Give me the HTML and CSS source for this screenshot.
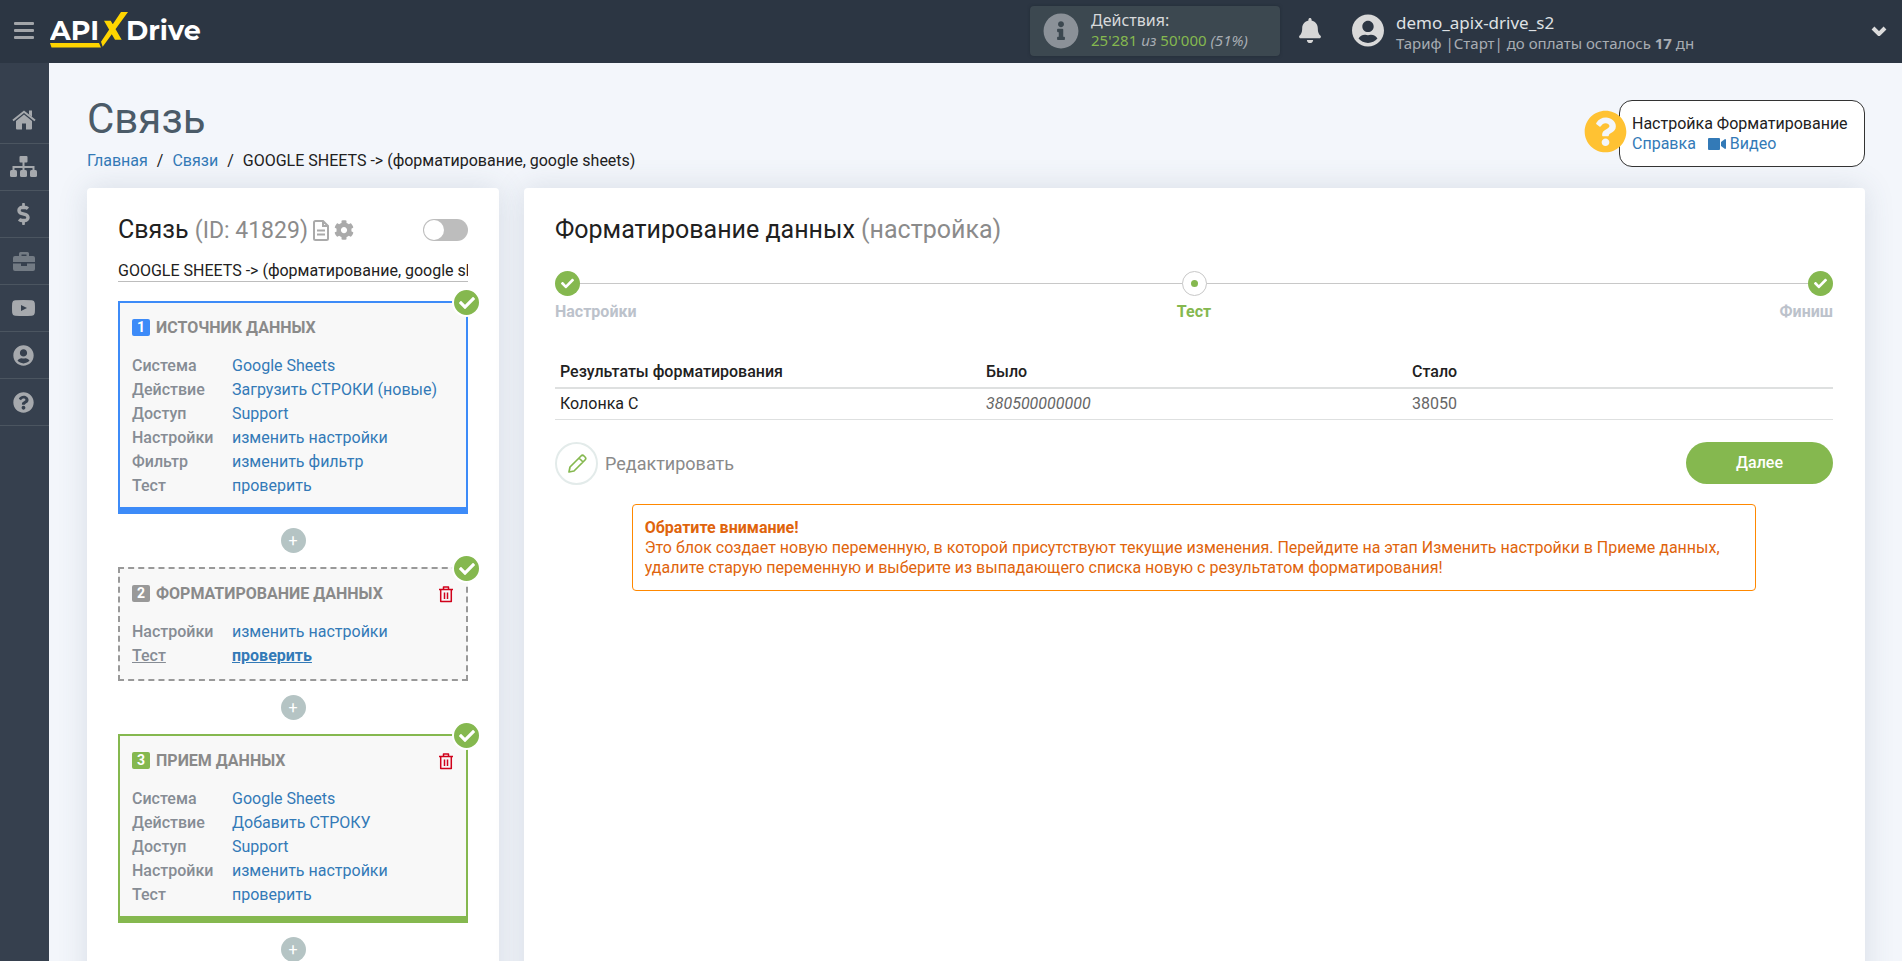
FILE: index.html
```html
<!DOCTYPE html>
<html lang="ru">
<head>
<meta charset="utf-8">
<title>ApiX-Drive — Связь</title>
<link rel="stylesheet" href="styles.css">
</head>
<body>
<svg class="sprite" aria-hidden="true">
  <symbol id="i-user" viewBox="0 0 496 512"><path d="M248 8C111 8 0 119 0 256s111 248 248 248 248-111 248-248S385 8 248 8zm0 96c48.600 0 88 39.400 88 88s-39.400 88-88 88-88-39.400-88-88 39.400-88 88-88zm0 344c-58.700 0-111.300-26.600-146.500-68.200 18.800-35.400 55.600-59.800 98.500-59.800 2.400 0 4.800.4 7.100 1.100 13 4.200 26.600 6.900 40.900 6.900s28-2.700 40.900-6.900c2.300-.7 4.700-1.100 7.100-1.100 42.900 0 79.700 24.400 98.500 59.800C359.300 421.400 306.700 448 248 448z"/></symbol>
  <symbol id="i-question" viewBox="0 0 512 512"><path d="M504 256c0 137-111 248-248 248S8 393 8 256 119 8 256 8s248 111 248 248zM262.700 90c-54.500 0-89.300 23-116.500 63.800-3.500 5.300-2.400 12.400 2.700 16.300l34.700 26.300c5.200 3.900 12.600 3 16.700-2.100 17.900-22.700 30.100-35.800 57.300-35.800 20.400 0 45.700 13.100 45.700 33 0 15-12.400 22.700-32.500 34C247.100 238.500 216 254.900 216 296v4c0 6.600 5.400 12 12 12h56c6.600 0 12-5.400 12-12v-1.300c0-28.500 83.200-29.600 83.200-106.700 0-58-60.200-102-116.500-102zM256 338c-25.400 0-46 20.600-46 46s20.600 46 46 46 46-20.600 46-46-20.600-46-46-46z"/></symbol>
  <symbol id="i-trash" viewBox="0 0 14 17"><path d="M0 3.500h14M4.500 3V1h5v2M1.700 3.500v12h10.600v-12M5.500 6.500v6.500M8.500 6.500v6.500" fill="none" stroke="currentColor" stroke-width="1.500" stroke-linejoin="round"/></symbol>
  <symbol id="i-check" viewBox="0 0 512 512"><path d="M173.900 439.400l-166.400-166.400c-10-10-10-26.200 0-36.200l36.200-36.200c10-10 26.200-10 36.200 0L192 312.700 432.100 72.600c10-10 26.200-10 36.200 0l36.200 36.200c10 10 10 26.200 0 36.200l-294.400 294.400c-10 10-26.200 10-36.200 0z"/></symbol>
</svg>

<header class="topbar">
  <button class="burger" type="button" aria-label="Меню"><span></span><span></span><span></span></button>
  <a class="logo" href="#" aria-label="ApiX-Drive">
    <svg width="154" height="37" viewBox="0 0 154 37">
      <text class="logo-text" x="0" y="28">API</text>
      <text class="logo-text" x="76" y="28">Drive</text>
      <path class="logo-mark" d="M0 31h49l2 4.500H1.500zM71 0h7L52.700 34.700 51 29.700zM54 8.700h6.700l11 19H65z"/>
    </svg>
  </a>
  <div class="usage">
    <svg class="usage-icon" viewBox="0 0 512 512"><path d="M256 8C119 8 8 119 8 256s111 248 248 248 248-111 248-248S393 8 256 8zm0 110c23.200 0 42 18.800 42 42s-18.800 42-42 42-42-18.800-42-42 18.800-42 42-42zm56 254c0 6.600-5.400 12-12 12h-88c-6.600 0-12-5.400-12-12v-24c0-6.600 5.400-12 12-12h12v-64h-12c-6.600 0-12-5.400-12-12v-24c0-6.600 5.400-12 12-12h64c6.600 0 12 5.400 12 12v100h12c6.600 0 12 5.400 12 12v24z"/></svg>
    <div class="usage-text">
      <div class="usage-title">Действия:</div>
      <div class="usage-count"><b>25'281</b> <i>из</i> <b>50'000</b> <i>(51%)</i></div>
    </div>
  </div>
  <button class="bell" type="button" aria-label="Уведомления"><svg width="22" height="25" viewBox="0 0 448 512"><path d="M224 512c35.300 0 64-28.700 64-64H160c0 35.300 28.700 64 64 64zm215.400-149.700c-19.300-20.800-55.500-52-55.500-154.300 0-77.700-54.500-139.900-127.900-155.200V32c0-17.700-14.300-32-32-32s-32 14.300-32 32v20.800C118.600 68.100 64.100 130.300 64.100 208c0 102.300-36.200 133.500-55.500 154.300-6 6.400-8.700 14.200-8.600 21.700.1 16.400 13 32 32.100 32h383.800c19.100 0 32-15.600 32.100-32 .1-7.500-2.600-15.300-8.600-21.700z"/></svg></button>
  <div class="account">
    <svg class="account-icon"><use href="#i-user"/></svg>
    <div class="account-text">
      <div class="account-name">demo_apix-drive_s2</div>
      <div class="account-plan">Тариф |Старт| до оплаты осталось <b>17</b> дн</div>
    </div>
  </div>
  <button class="more" type="button" aria-label="Ещё"><svg width="16" height="10" viewBox="0 0 16 10"><path d="M2 2l6 6 6-6" fill="none" stroke="currentColor" stroke-width="4"/></svg></button>
</header>

<div class="shell">
  <nav class="side" aria-label="Разделы">
    <a href="#" aria-label="Главная"><svg width="24" height="20" viewBox="0 0 24 20"><path d="M12 4.500l8 6.500v7.500q0 1-1 1h-5v-6h-4v6H5q-1 0-1-1V11z"/><path d="M1 10.500L12 1.700l11 8.800" fill="none" stroke="currentColor" stroke-width="2"/><path d="M17 .5h3V7l-3-2.500z"/></svg></a>
    <a href="#" aria-label="Связи"><svg width="27" height="22" viewBox="0 0 27 22"><path d="M12.500 6h2v4h10v5h-2v-3h-8v3h-2v-3h-8v3h-2v-5h10z"/><rect x="9.500" width="8" height="6.500" rx="1"/><rect y="14" width="7" height="7" rx="1.500"/><rect x="10" y="14" width="7" height="7" rx="1.500"/><rect x="20" y="14" width="7" height="7" rx="1.500"/></svg></a>
    <a href="#" aria-label="Оплата"><svg width="13" height="22" viewBox="0 0 288 512"><path d="M209.200 233.400l-108-31.600C88.700 198.200 80 186.500 80 173.500c0-16.300 13.200-29.500 29.500-29.500h66.300c12.200 0 24.200 3.700 34.200 10.500 6.100 4.100 14.300 3.100 19.500-2l34.800-34c7.100-6.900 6.100-18.400-1.800-24.500C238 74.800 207.400 64.100 176 64V16c0-8.800-7.200-16-16-16h-32c-8.800 0-16 7.200-16 16v48h-2.500C45.800 64-5.400 118.700.5 183.600c4.200 46.100 39.400 83.600 83.800 96.600l102.500 30c12.500 3.700 21.200 15.300 21.200 28.300 0 16.300-13.200 29.500-29.500 29.500h-66.300C100 368 88 364.300 78 357.500c-6.100-4.100-14.300-3.100-19.500 2l-34.800 34c-7.100 6.900-6.100 18.400 1.800 24.500 24.500 19.200 55.100 29.900 86.500 30v48c0 8.800 7.200 16 16 16h32c8.800 0 16-7.200 16-16v-48.200c46.600-.9 90.300-28.600 105.700-72.700 21.500-61.600-14.600-124.800-72.500-141.700z"/></svg></a>
    <a class="dim" href="#" aria-label="Проекты"><svg width="22" height="19" viewBox="0 0 22 19"><path fill-rule="evenodd" d="M6 4V1.500Q6 0 7.500 0h7Q16 0 16 1.500V4h4q2 0 2 2v4H0V6q0-2 2-2zm2.500 0h5V2.500h-5zM0 11.500h8V14h6v-2.500h8V17q0 2-2 2H2q-2 0-2-2z"/></svg></a>
    <a href="#" aria-label="Видео"><svg width="23" height="16" viewBox="0 0 23 16"><path fill-rule="evenodd" d="M3 .3Q11.500-.3 20 .3q2.500.2 2.800 2.700.4 5 0 10-.3 2.500-2.800 2.700-8.500.6-17 0Q.5 15.500.2 13q-.4-5 0-10Q.5.500 3 .3zM9 5v6l6-3z"/></svg></a>
    <a href="#" aria-label="Профиль"><svg width="21" height="21"><use href="#i-user"/></svg></a>
    <a href="#" aria-label="Помощь"><svg width="21" height="21"><use href="#i-question"/></svg></a>
  </nav>

  <main class="page">
    <div class="page-head">
      <div>
        <h1>Связь</h1>
        <nav class="crumbs" aria-label="Навигация"><a href="#">Главная</a><span>/</span><a href="#">Связи</a><span>/</span>GOOGLE SHEETS -&gt; (форматирование, google sheets)</nav>
      </div>
      <aside class="help">
        <svg class="help-icon"><use href="#i-question"/></svg>
        <div>Настройка Форматирование</div>
        <div class="help-links"><a href="#">Справка</a><a href="#"><svg width="18" height="12" viewBox="0 0 18 12"><rect width="12" height="12" rx="1"/><path d="M13 4l4-3q1 0 1 1v8q0 1-1 1l-4-3z"/></svg> Видео</a></div>
      </aside>
    </div>

    <div class="columns">
      <section class="card flow">
        <div class="flow-head">
          <h2>Связь <small>(ID: 41829)</small></h2>
          <button class="icon-btn" type="button" aria-label="Журнал"><svg width="16" height="21" viewBox="0 0 16 21"><path d="M1 2.500Q1 1 2.500 1H10l5 5v12.500q0 1.500-1.500 1.500h-11Q1 20 1 18.500zM10 1v5h5M4 10.500h8M4 14.500h8" fill="none" stroke="currentColor" stroke-width="2"/></svg></button>
          <button class="icon-btn" type="button" aria-label="Настройки связи"><svg width="20" height="20" viewBox="0 0 512 512"><path d="M487.400 315.700l-42.600-24.600c4.300-23.200 4.300-47 0-70.200l42.600-24.600c4.900-2.800 7.100-8.600 5.500-14-11.100-35.600-30-67.800-54.700-94.600-3.800-4.100-10-5.100-14.800-2.300L380.800 110c-17.900-15.400-38.500-27.300-60.800-35.100V25.800c0-5.600-3.900-10.500-9.400-11.700-36.700-8.200-74.300-7.800-109.200 0-5.500 1.200-9.400 6.100-9.400 11.700V75c-22.200 7.900-42.800 19.800-60.800 35.100L88.700 85.500c-4.900-2.800-11-1.900-14.800 2.300-24.700 26.700-43.600 58.900-54.700 94.600-1.700 5.400.6 11.200 5.500 14L67.300 221c-4.300 23.200-4.300 47 0 70.200l-42.600 24.600c-4.900 2.800-7.100 8.600-5.500 14 11.100 35.600 30 67.800 54.700 94.600 3.800 4.100 10 5.100 14.800 2.300l42.600-24.600c17.900 15.400 38.500 27.300 60.800 35.100v49.200c0 5.600 3.900 10.500 9.400 11.700 36.700 8.200 74.300 7.800 109.200 0 5.500-1.200 9.400-6.100 9.400-11.700v-49.200c22.200-7.900 42.800-19.800 60.800-35.100l42.600 24.600c4.900 2.800 11 1.900 14.800-2.300 24.700-26.700 43.600-58.900 54.700-94.600 1.500-5.500-.7-11.300-5.600-14.100zM256 336c-44.100 0-80-35.900-80-80s35.900-80 80-80 80 35.900 80 80-35.900 80-80 80z"/></svg></button>
          <input class="toggle" type="checkbox" aria-label="Включить связь">
        </div>
        <input class="flow-name" type="text" aria-label="Название связи" value="GOOGLE SHEETS -&gt; (форматирование, google sheets)">

        <article class="block source">
          <span class="done"><svg><use href="#i-check"/></svg></span>
          <h3><span class="num">1</span>ИСТОЧНИК ДАННЫХ</h3>
          <dl>
            <dt>Система</dt><dd><a href="#">Google Sheets</a></dd>
            <dt>Действие</dt><dd><a href="#">Загрузить СТРОКИ (новые)</a></dd>
            <dt>Доступ</dt><dd><a href="#">Support</a></dd>
            <dt>Настройки</dt><dd><a href="#">изменить настройки</a></dd>
            <dt>Фильтр</dt><dd><a href="#">изменить фильтр</a></dd>
            <dt>Тест</dt><dd><a href="#">проверить</a></dd>
          </dl>
        </article>
        <button class="add" type="button" aria-label="Добавить блок">+</button>
        <article class="block format">
          <span class="done"><svg><use href="#i-check"/></svg></span>
          <h3><span class="num">2</span>ФОРМАТИРОВАНИЕ ДАННЫХ<button class="trash" type="button" aria-label="Удалить"><svg width="14" height="17"><use href="#i-trash"/></svg></button></h3>
          <dl>
            <dt>Настройки</dt><dd><a href="#">изменить настройки</a></dd>
            <dt class="current">Тест</dt><dd class="current"><a href="#">проверить</a></dd>
          </dl>
        </article>
        <button class="add" type="button" aria-label="Добавить блок">+</button>
        <article class="block target">
          <span class="done"><svg><use href="#i-check"/></svg></span>
          <h3><span class="num">3</span>ПРИЕМ ДАННЫХ<button class="trash" type="button" aria-label="Удалить"><svg width="14" height="17"><use href="#i-trash"/></svg></button></h3>
          <dl>
            <dt>Система</dt><dd><a href="#">Google Sheets</a></dd>
            <dt>Действие</dt><dd><a href="#">Добавить СТРОКУ</a></dd>
            <dt>Доступ</dt><dd><a href="#">Support</a></dd>
            <dt>Настройки</dt><dd><a href="#">изменить настройки</a></dd>
            <dt>Тест</dt><dd><a href="#">проверить</a></dd>
          </dl>
        </article>
        <button class="add" type="button" aria-label="Добавить блок">+</button>
      </section>

      <section class="card detail">
        <h2>Форматирование данных <small>(настройка)</small></h2>
        <ol class="steps">
          <li><span class="dot ok"><svg><use href="#i-check"/></svg></span>Настройки</li>
          <li class="active"><span class="dot"></span>Тест</li>
          <li><span class="dot ok"><svg><use href="#i-check"/></svg></span>Финиш</li>
        </ol>
        <table>
          <thead><tr><th>Результаты форматирования</th><th>Было</th><th>Стало</th></tr></thead>
          <tbody><tr><td>Колонка C</td><td class="before">380500000000</td><td class="after">38050</td></tr></tbody>
        </table>
        <div class="actions">
          <button class="edit" type="button"><span class="edit-icon"><svg width="20" height="20" viewBox="0 0 20 20"><path d="M2 18l1-5L14 2q1.500-1.500 3 0l1 1q1.500 1.500 0 3L7 17zM12 4l4 4" fill="none" stroke="currentColor" stroke-width="1.700" stroke-linejoin="round"/></svg></span>Редактировать</button>
          <button class="next" type="button">Далее</button>
        </div>
        <div class="notice">
          <b>Обратите внимание!</b>
          <p>Это блок создает новую переменную, в которой присутствуют текущие изменения. Перейдите на этап Изменить настройки в Приеме данных, удалите старую переменную и выберите из выпадающего списка новую с результатом форматирования!</p>
        </div>
      </section>
    </div>
  </main>
</div>
</body>
</html>
```
FILE: styles.css
```css
* { box-sizing: border-box; }
html, body { height: 100%; }
body {
  margin: 0;
  display: flex;
  flex-direction: column;
  background: #f3f6fb;
  color: #212121;
  font: 16px/20px Roboto, sans-serif;
}
a { color: #337ab7; text-decoration: none; }
button { border: 0; padding: 0; background: none; font: inherit; color: inherit; cursor: pointer; }
h1, h2, h3, p, dl, dd, ol { margin: 0; padding: 0; }
svg { fill: currentColor; display: block; }
.sprite { display: none; }

/* Top bar */
.topbar {
  flex: none;
  height: 63px;
  display: flex;
  align-items: center;
  padding: 0 15px 2px 14px;
  background: #2c3643;
  color: #a8adb3;
  font-family: "Noto Sans", "Open Sans", sans-serif;
}
.burger { display: grid; gap: 4px; width: 20px; }
.burger span { height: 3px; border-radius: 1px; background: #a2a5a9; }
.logo { margin: 0 auto 0 16px; }
.logo-text { font: 700 27px Montserrat, Inter, sans-serif; fill: #fff; }
.logo-mark { fill: #ffd500; }
.usage {
  display: flex;
  align-items: center;
  gap: 12px;
  width: 250px;
  height: 50px;
  padding-left: 13px;
  margin-right: 19px;
  border-radius: 4px;
  background: #3c4850;
  box-shadow: 0 0 3px #222b36;
}
.usage-icon { width: 36px; height: 36px; color: #8b9198; }
.usage-title { color: #d7d9db; }
.usage-text { padding-bottom: 1px; }
.usage-count b { font-weight: 400; color: #85b84f; }
.usage-count { font-size: 15px; }
.bell { color: #d7d7d7; margin-right: 31px; }
.account { display: flex; align-items: center; gap: 12px; width: 519px; }
.account-icon { width: 32px; height: 33px; color: #d9d9d9; }
.account-text { padding-top: 4px; }
.account-name { font-size: 17px; color: #dfe1e3; }
.account-plan { font-size: 15px; }
.more { color: #dcdcdc; }

/* Side menu */
.shell { flex: 1; display: flex; min-height: 0; }
.side { flex: none; width: 49px; padding-top: 34px; background: #36404e; color: #a6a9ad; }
.side a {
  display: flex;
  align-items: center;
  justify-content: center;
  height: 47px;
  padding-right: 2px;
  border-bottom: 1px solid #4b5560;
  color: inherit;
}
.side .dim { color: #737b84; }

/* Page */
.page {
  flex: 1;
  display: flex;
  flex-direction: column;
  min-width: 0;
  padding: 37px 37px 0 38px;
  overflow-y: auto;
  scrollbar-width: none;
}
.page-head { flex: none; display: flex; justify-content: space-between; height: 88px; }
h1 { font-size: 42px; line-height: 38px; font-weight: 400; color: #4b5b68; }
.crumbs { margin-top: 13px; display: flex; gap: 9px; }
.help {
  position: relative;
  width: 246px;
  height: 67px;
  padding: 13px 12px;
  border: 1px solid #333;
  border-radius: 13px;
  background: #fff;
  white-space: nowrap;
}
.help-icon { position: absolute; left: -36px; top: 9px; width: 43px; height: 43px; color: #ffc233; }
.help-links { display: flex; gap: 12px; }
.help-links a { display: flex; align-items: center; gap: 4px; }

.columns { flex: 1 0 auto; display: flex; gap: 25px; }
.card {
  padding: 31px 32px 31px 31px;
  border-radius: 4px;
  background: #fff;
  box-shadow: 0 0 30px rgba(60, 80, 110, .15);
}
.flow { flex: none; width: 412px; padding-right: 31px; }
.detail { flex: 1; min-width: 0; }
h2 { font-size: 25px; line-height: 22px; font-weight: 400; }
h2 small { font-size: 25px; color: #8b8b8b; }

/* Connection flow */
.flow-head { display: flex; align-items: center; gap: 5px; height: 22px; }
.flow-head small { font-size: 23px; }
.icon-btn { color: #aaa; }
.toggle {
  appearance: none;
  margin: 0 0 0 auto;
  width: 45px;
  height: 22px;
  padding: 1px;
  border-radius: 11px;
  background: #bdbdbd;
}
.toggle::before { content: ""; display: block; width: 20px; height: 20px; border-radius: 50%; background: #fff; }
.flow-name {
  display: block;
  width: 100%;
  height: 22px;
  margin: 19px 0;
  padding: 0;
  border: 0;
  border-bottom: 1px solid #bdbdbd;
  background: none;
  color: inherit;
  font: inherit;
}
.block { position: relative; padding: 13px 13px 9px 12px; border: 2px solid; background: #f8f8f8; }
.source { border-color: #3d8bf8; border-bottom-width: 7px; }
.format { border: 2px dashed #999; padding-bottom: 11px; }
.target { border-color: #85b84f; border-bottom-width: 7px; }
h3 { display: flex; align-items: center; gap: 6px; height: 24px; font-size: 16px; font-weight: 700; color: #8a8a8a; }
.num {
  width: 18px;
  height: 17px;
  margin-bottom: 2px;
  border-radius: 2px;
  color: #fff;
  font-size: 14px;
  line-height: 17px;
  text-align: center;
}
.source .num { background: #3d8bf8; }
.format .num { background: #999; }
.target .num { background: #85b84f; }
.trash { margin-left: auto; color: #d0021b; }
.done {
  position: absolute;
  right: -15px;
  top: -15px;
  width: 29px;
  height: 29px;
  display: grid;
  place-items: center;
  border-radius: 50%;
  border: 2px solid #fff;
  background: #85b84f;
  color: #fff;
}
.done svg { width: 16px; height: 16px; }
dl { display: grid; grid-template-columns: 100px 1fr; line-height: 24px; margin-top: 14px; }
dt { font-weight: 500; color: #868c94; }
dt.current, dd.current a { text-decoration: underline; }
dd.current { font-weight: 700; }
.add {
  display: block;
  width: 25px;
  height: 25px;
  margin: 14px auto;
  border-radius: 50%;
  background: #b5c4c4;
  color: #fff;
}

/* Stage details */
.steps {
  display: flex;
  justify-content: space-between;
  margin-top: 30px;
  list-style: none;
  font-weight: 700;
  color: #bcc2cb;
  background: linear-gradient(#c8c8c8, #c8c8c8) 0 12px / 100% 1px no-repeat;
}
.steps li { flex: 1; display: flex; flex-direction: column; gap: 6px; }
.steps li.active { align-items: center; color: #85b84f; }
.steps li:last-child { align-items: flex-end; }
.dot { display: grid; place-items: center; width: 25px; height: 25px; border-radius: 50%; border: 1px solid #c8c8c8; background: #fff; }
.dot::before { content: ""; width: 7px; height: 7px; border-radius: 50%; background: #85b84f; }
.dot.ok { border: 0; background: #85b84f; color: #fff; }
.dot.ok::before { content: none; }
.dot svg { width: 13px; height: 13px; }
table { width: 100%; margin-top: 35px; table-layout: fixed; border-collapse: collapse; text-align: left; }
th { padding: 5px; font-weight: 500; border-bottom: 2px solid #dee0e0; }
td { padding: 5px; border-bottom: 1px solid #dee0e0; }
.before { font-style: italic; color: #666; }
.after { color: #666; }
.actions { display: flex; justify-content: space-between; align-items: flex-start; margin-top: 22px; }
.edit { display: flex; align-items: center; gap: 7px; font-size: 18px; color: #8a8a8a; }
.edit-icon { display: grid; place-items: center; width: 43px; height: 43px; border: 2px solid #e3ebea; border-radius: 50%; color: #85b84f; }
.next { width: 147px; height: 42px; border-radius: 21px; background: #85b84f; color: #fff; font-weight: 500; }
.notice { width: 88%; margin: 19px auto 0; padding: 13px 12px 12px; border: 1px solid #ff8800; border-radius: 4px; color: #df640c; }
```
